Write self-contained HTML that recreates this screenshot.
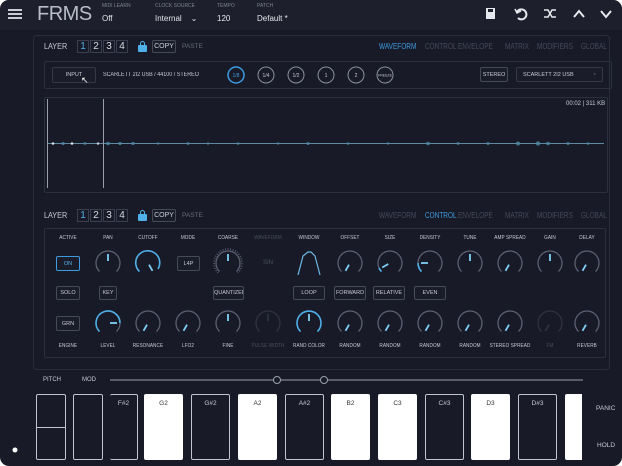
<!DOCTYPE html>
<html><head><meta charset="utf-8"><style>
*{margin:0;padding:0;box-sizing:border-box}
body{width:622px;height:466px;background:#fff;overflow:hidden;font-family:"Liberation Sans",sans-serif}
#app{position:absolute;left:0;top:0;width:622px;height:466px;background:#191a27;border-radius:9px;overflow:hidden}
.a{position:absolute;white-space:nowrap}
.t{position:absolute;white-space:nowrap;font-size:5.5px;color:#c7cbd6;transform:translateX(-50%) scaleX(.85);letter-spacing:.1px}
.d{color:#4a4f60}
.box{position:absolute;border:1px solid #3a3e4e;border-radius:2px}
.btn{position:absolute;border:1px solid #454a5a;border-radius:2px;font-size:5.5px;color:#c7cbd6;text-align:center;background:#1b1c29;white-space:nowrap;overflow:hidden}
.lab{font-size:5px;color:#7d8293}
.val{font-size:8px;color:#e4e6ec}
.tab{position:absolute;font-size:8.5px;color:#454a5c;transform:scaleX(.76);transform-origin:left;white-space:nowrap}
.num{position:absolute;width:12px;height:13px;border:1px solid #3a3e4e;font-size:10px;color:#d7dae2;text-align:center;line-height:12px}
.key{position:absolute;top:394px;height:66px;width:39px;border:1px solid #bfc3cc;border-radius:2px;font-size:6.5px;text-align:center;padding-top:5px;color:#c7cbd6}
.w{background:#fff;color:#333;border-color:#fff}
</style></head><body><div id="app">
<div class="a" style="left:0;top:0;width:622px;height:30px;background:#1e1f2c"></div>
<div class="a" style="left:8px;top:9px;width:14px;height:1.5px;background:#c9ccd5;box-shadow:0 4px 0 #c9ccd5,0 8px 0 #c9ccd5"></div>
<div class="a" style="left:37px;top:3px;font-size:20px;color:#b9bdc8;font-weight:300;letter-spacing:-.5px">FRMS</div>
<div class="a lab" style="left:102px;top:3px">MIDI LEARN</div>
<div class="a val" style="left:102px;top:14px">Off</div>
<div class="a lab" style="left:155px;top:3px">CLOCK SOURCE</div>
<div class="a val" style="left:155px;top:14px">Internal &nbsp;&nbsp;&nbsp;⌄</div>
<div class="a lab" style="left:217px;top:3px">TEMPO</div>
<div class="a val" style="left:217px;top:14px">120</div>
<div class="a lab" style="left:257px;top:3px">PATCH</div>
<div class="a val" style="left:257px;top:14px">Default *</div>
<svg class="a" style="left:480px;top:4px" width="140" height="20" viewBox="0 0 140 20" fill="none" stroke="#e6e8ee" stroke-width="2">
<rect x="6" y="4" width="9" height="11" fill="#e6e8ee" stroke="none"/><rect x="8" y="5" width="5" height="3" fill="#1e1f2c" stroke="none"/>
<path d="M37 8 A5 5 0 1 1 38 14" /><path d="M35 5 L37 9 L41 7" stroke-width="1.5"/>
<path d="M64 6 L68 6 L72 13 L76 13 M64 13 L68 13 L72 6 L76 6" stroke-width="1.5"/>
<path d="M94 13 L99 7 L104 13"/><path d="M121 7 L126 13 L131 7"/>
</svg>
<div class="box" style="left:33px;top:35px;width:577px;height:335px;border-radius:4px;border-color:#2a2d3c"></div>
<div class="a" style="left:44px;top:41px;font-size:8.5px;color:#c7cbd6;transform:scaleX(.85);transform-origin:left">LAYER</div>
<div class="num" style="left:77px;top:40px;color:#4fb0e8">1</div><div class="num" style="left:90px;top:40px">2</div><div class="num" style="left:103px;top:40px">3</div><div class="num" style="left:116px;top:40px">4</div>
<div class="a" style="left:138px;top:41px;width:9px;height:11px"><div style="position:absolute;left:2px;top:0;width:5px;height:6px;border:1.5px solid #4fb0e8;border-radius:3px 3px 0 0"></div><div style="position:absolute;left:0;top:4px;width:9px;height:7px;background:#4fb0e8;border-radius:1px"></div></div>
<div class="btn" style="left:152px;top:40px;width:24px;height:13px;font-size:7px;line-height:12px">COPY</div>
<div class="a" style="left:182px;top:43px;font-size:6.5px;color:#666b7c">PASTE</div>
<div class="tab" style="left:379px;top:41px;color:#3d9be0">WAVEFORM</div>
<div class="tab" style="left:425px;top:41px">CONTROL</div>
<div class="tab" style="left:458px;top:41px">ENVELOPE</div>
<div class="tab" style="left:505px;top:41px">MATRIX</div>
<div class="tab" style="left:537px;top:41px">MODIFIERS</div>
<div class="tab" style="left:581px;top:41px">GLOBAL</div>
<div class="box" style="left:44px;top:61px;width:568px;height:28px;border-color:#2c2f3e"></div>
<div class="btn" style="left:52px;top:67px;width:44px;height:16px;line-height:15px;border-color:#353848">INPUT</div>
<div class="a" style="left:81px;top:75px;color:#fff;font-size:9px">↖</div>
<div class="a" style="left:103px;top:72px;font-size:6px;color:#c7cbd6;transform:scaleX(.9);transform-origin:left">SCARLETT 2I2 USB / 44100 / STEREO</div>
<svg class="a" style="left:220px;top:64px" width="180" height="22"><g fill="none" stroke="#8a8f9e" stroke-width="1">
<circle cx="16" cy="11" r="8" stroke="#3d9be0" stroke-width="1.5"/><circle cx="46" cy="11" r="8"/><circle cx="76" cy="11" r="8"/><circle cx="106" cy="11" r="8"/><circle cx="136" cy="11" r="8"/><circle cx="165" cy="11" r="8"/></g>
<g font-size="5" fill="#c7cbd6" text-anchor="middle" font-family="Liberation Sans"><text x="16" y="13" fill="#3d9be0">1/8</text><text x="46" y="13">1/4</text><text x="76" y="13">1/2</text><text x="106" y="13">1</text><text x="136" y="13">2</text><text x="165" y="12.5" font-size="3.5">FREEZE</text></g></svg>
<div class="btn" style="left:480px;top:67px;width:28px;height:15px;line-height:14px">STEREO</div>
<div class="btn" style="left:516px;top:67px;width:87px;height:15px;line-height:14px;text-align:left;padding-left:6px;border-color:#353848">SCARLETT 2I2 USB<span style="position:absolute;right:6px;color:#444">▾</span></div>
<div class="box" style="left:44px;top:97px;width:564px;height:96px;border-color:#2c2f3e"></div>
<div class="a" style="left:566px;top:101px;font-size:6px;color:#c7cbd6">00:02 | 311 KB</div>
<div class="a" style="left:48px;top:143px;width:556px;height:1px;background:#5e8aa0"></div>
<svg class="a" style="left:48px;top:139px" width="560" height="9"><g fill="#4f8aa8" opacity=".8">
<circle cx="5" cy="4.5" r="1.3" fill="#fff"/><circle cx="15" cy="4.5" r="1.6"/><circle cx="24" cy="4.5" r="1.3" fill="#fff"/><circle cx="37" cy="4.5" r="1.4"/><circle cx="50" cy="4.5" r="1.3" fill="#ddd"/><circle cx="60" cy="4.5" r="1.8"/><circle cx="72" cy="4.5" r="1.6"/><circle cx="85" cy="4.5" r="1.6"/><circle cx="110" cy="4.5" r="1.2"/><circle cx="140" cy="4.5" r="1.4"/><circle cx="160" cy="4.5" r="1.2"/><circle cx="190" cy="4.5" r="1.3"/><circle cx="230" cy="4.5" r="1.2"/><circle cx="260" cy="4.5" r="1.5"/><circle cx="300" cy="4.5" r="1.3"/><circle cx="340" cy="4.5" r="1.2"/><circle cx="380" cy="4.5" r="1.8"/><circle cx="410" cy="4.5" r="1.4"/><circle cx="440" cy="4.5" r="1.5"/><circle cx="470" cy="4.5" r="2"/><circle cx="490" cy="4.5" r="2.2"/><circle cx="500" cy="4.5" r="1.8"/><circle cx="520" cy="4.5" r="1.5"/><circle cx="540" cy="4.5" r="1.3"/></g></svg>
<div class="a" style="left:47px;top:99px;width:1px;height:89px;background:#9a9eab"></div>
<div class="a" style="left:103px;top:99px;width:1px;height:89px;background:#9a9eab"></div>
<div class="a" style="left:44px;top:210px;font-size:8.5px;color:#c7cbd6;transform:scaleX(.85);transform-origin:left">LAYER</div>
<div class="num" style="left:77px;top:209px;color:#4fb0e8">1</div><div class="num" style="left:90px;top:209px">2</div><div class="num" style="left:103px;top:209px">3</div><div class="num" style="left:116px;top:209px">4</div>
<div class="a" style="left:138px;top:210px;width:9px;height:11px"><div style="position:absolute;left:2px;top:0;width:5px;height:6px;border:1.5px solid #4fb0e8;border-radius:3px 3px 0 0"></div><div style="position:absolute;left:0;top:4px;width:9px;height:7px;background:#4fb0e8;border-radius:1px"></div></div>
<div class="btn" style="left:152px;top:209px;width:24px;height:13px;font-size:7px;line-height:12px">COPY</div>
<div class="a" style="left:182px;top:212px;font-size:6.5px;color:#666b7c">PASTE</div>
<div class="tab" style="left:379px;top:210px">WAVEFORM</div>
<div class="tab" style="left:425px;top:210px;color:#3d9be0">CONTROL</div>
<div class="tab" style="left:458px;top:210px">ENVELOPE</div>
<div class="tab" style="left:505px;top:210px">MATRIX</div>
<div class="tab" style="left:537px;top:210px">MODIFIERS</div>
<div class="tab" style="left:581px;top:210px">GLOBAL</div>
<div class="box" style="left:44px;top:228px;width:562px;height:130px;border-color:#2c2f3e"></div>
<div class="t" style="left:68px;top:235px">ACTIVE</div><div class="t" style="left:108px;top:235px">PAN</div><div class="t" style="left:148px;top:235px">CUTOFF</div><div class="t" style="left:188px;top:235px">MODE</div><div class="t" style="left:228px;top:235px">COARSE</div><div class="t d" style="left:268px;top:235px">WAVEFORM</div><div class="t" style="left:309px;top:235px">WINDOW</div><div class="t" style="left:350px;top:235px">OFFSET</div><div class="t" style="left:390px;top:235px">SIZE</div><div class="t" style="left:430px;top:235px">DENSITY</div><div class="t" style="left:470px;top:235px">TUNE</div><div class="t" style="left:510px;top:235px">AMP SPREAD</div><div class="t" style="left:550px;top:235px">GAIN</div><div class="t" style="left:587px;top:235px">DELAY</div>
<div class="t" style="left:68px;top:343px">ENGINE</div><div class="t" style="left:108px;top:343px">LEVEL</div><div class="t" style="left:148px;top:343px">RESONANCE</div><div class="t" style="left:188px;top:343px">LFO2</div><div class="t" style="left:228px;top:343px">FINE</div><div class="t d" style="left:268px;top:343px">PULSE WIDTH</div><div class="t" style="left:309px;top:343px">RAND COLOR</div><div class="t" style="left:350px;top:343px">RANDOM</div><div class="t" style="left:390px;top:343px">RANDOM</div><div class="t" style="left:430px;top:343px">RANDOM</div><div class="t" style="left:470px;top:343px">RANDOM</div><div class="t" style="left:510px;top:343px">STEREO SPREAD</div><div class="t d" style="left:550px;top:343px">FM</div><div class="t" style="left:587px;top:343px">REVERB</div>
<div class="btn" style="left:56px;top:256px;width:24px;height:15px;line-height:14px;border-color:#3d9be0;color:#5ab4ee">ON</div>
<div class="btn" style="left:177px;top:256px;width:23px;height:15px;line-height:14px">L4P</div>
<div class="a" style="left:263px;top:260px;font-size:6px;color:#4a4f60">SIN</div>
<div class="btn" style="left:56px;top:316px;width:24px;height:15px;line-height:14px">GRN</div>
<div class="btn" style="left:56px;top:286px;width:24px;height:14px;line-height:13px">SOLO</div>
<div class="btn" style="left:99px;top:286px;width:18px;height:14px;line-height:13px">KEY</div>
<div class="btn" style="left:213px;top:286px;width:31px;height:14px;line-height:13px">QUANTIZED</div>
<div class="btn" style="left:293px;top:286px;width:32px;height:14px;line-height:13px">LOOP</div>
<div class="btn" style="left:334px;top:286px;width:32px;height:14px;line-height:13px">FORWARD</div>
<div class="btn" style="left:373px;top:286px;width:32px;height:14px;line-height:13px">RELATIVE</div>
<div class="btn" style="left:414px;top:286px;width:32px;height:14px;line-height:13px">EVEN</div>
<svg class="a" style="left:0;top:0" width="622" height="466">
<defs><path id="k" d="M-8.5 8.5 A12 12 0 1 1 8.5 8.5" fill="none" stroke="#5b6072" stroke-width="1.3"/>
<path id="kd" d="M-8.5 8.5 A12 12 0 1 1 8.5 8.5" fill="none" stroke="#2f3242" stroke-width="1.3"/>
<line id="i" x1="0" y1="-2" x2="0" y2="-9" stroke="#7fd0f6" stroke-width="1.8"/>
<line id="id" x1="0" y1="-2" x2="0" y2="-9" stroke="#2f3242" stroke-width="1.8"/></defs>
<g transform="translate(108 263)"><use href="#k"/><use href="#i"/></g>
<g transform="translate(148 263)"><path d="M-8.5 8.5 A12 12 0 1 1 10 6" fill="none" stroke="#4fb0e8" stroke-width="1.6"/><use href="#i" transform="rotate(150)"/></g>
<g transform="translate(228 263)"><use href="#k"/><path d="M-9.9 9.9 A14 14 0 1 1 9.9 9.9" fill="none" stroke="#5b6072" stroke-width="1.5" stroke-dasharray="1 1.5"/><use href="#i"/></g>
<path d="M298 275 L303 256 L308 252 L311 252 L315 256 L320 275" fill="none" stroke="#6bb8e6" stroke-width="1.2"/>
<g transform="translate(350 263)"><use href="#k"/><use href="#i" transform="rotate(-150)"/></g>
<g transform="translate(390 263)"><use href="#k"/><path d="M-8.5 8.5 A12 12 0 0 1 -11 5" fill="none" stroke="#4fb0e8" stroke-width="1.6"/><use href="#i" transform="rotate(-120)"/></g>
<g transform="translate(430 263)"><use href="#k"/><path d="M-8.5 8.5 A12 12 0 0 1 -12 0" fill="none" stroke="#4fb0e8" stroke-width="1.6"/><use href="#i" transform="rotate(-90)"/></g>
<g transform="translate(470 263)"><use href="#k"/><use href="#i"/></g>
<g transform="translate(510 263)"><use href="#k"/><use href="#i" transform="rotate(-150)"/></g>
<g transform="translate(550 263)"><use href="#k"/><use href="#i"/></g>
<g transform="translate(587 263)"><use href="#k"/><use href="#i" transform="rotate(-150)"/></g>
<g transform="translate(108 323)"><path d="M-8.5 8.5 A12 12 0 1 1 12 0" fill="none" stroke="#4fb0e8" stroke-width="1.6"/><path d="M12 0 A12 12 0 0 1 8.5 8.5" fill="none" stroke="#5b6072" stroke-width="1.3"/><use href="#i" transform="rotate(90)"/></g>
<g transform="translate(148 323)"><use href="#k"/><use href="#i" transform="rotate(-150)"/></g>
<g transform="translate(188 323)"><use href="#k"/><use href="#i" transform="rotate(-150)"/></g>
<g transform="translate(228 323)"><use href="#k"/><use href="#i"/></g>
<g transform="translate(268 323)"><use href="#kd"/><use href="#id"/></g>
<g transform="translate(309 323)"><path d="M-8.5 8.5 A12 12 0 1 1 8.5 8.5" fill="none" stroke="#4fb0e8" stroke-width="1.6"/><use href="#i"/></g>
<g transform="translate(350 323)"><use href="#k"/><use href="#i" transform="rotate(-150)"/></g>
<g transform="translate(390 323)"><use href="#k"/><use href="#i" transform="rotate(-150)"/></g>
<g transform="translate(430 323)"><use href="#k"/><use href="#i" transform="rotate(-150)"/></g>
<g transform="translate(470 323)"><use href="#k"/><use href="#i" transform="rotate(-150)"/></g>
<g transform="translate(510 323)"><use href="#k"/><use href="#i" transform="rotate(-150)"/></g>
<g transform="translate(550 323)"><use href="#kd"/><use href="#id" transform="rotate(-150)"/></g>
<g transform="translate(587 323)"><use href="#k"/><use href="#i" transform="rotate(-150)"/></g>
<line x1="110" y1="380" x2="583" y2="380" stroke="#9a9eab" stroke-width="1"/>
<circle cx="277" cy="380" r="3.5" fill="#191a27" stroke="#9a9eab"/><circle cx="324" cy="380" r="3.5" fill="#191a27" stroke="#9a9eab"/>
<circle cx="15" cy="450" r="2.5" fill="#fff"/>
</svg>
<div class="a" style="left:43px;top:377px;font-size:6px;color:#c7cbd6">PITCH</div>
<div class="a" style="left:82px;top:377px;font-size:6px;color:#c7cbd6">MOD</div>
<div class="key" style="left:36px;width:30px;padding:0"><div style="position:absolute;left:0;right:0;top:32px;height:1px;background:#bfc3cc"></div></div>
<div class="key" style="left:73px;width:30px;padding:0"></div>
<div class="key" style="left:110px;width:28px;border-left:none">F#2</div>
<div class="key w" style="left:144px">G2</div>
<div class="key" style="left:191px">G#2</div>
<div class="key w" style="left:238px">A2</div>
<div class="key" style="left:285px">A#2</div>
<div class="key w" style="left:331px">B2</div>
<div class="key w" style="left:378px">C3</div>
<div class="key" style="left:425px">C#3</div>
<div class="key w" style="left:471px">D3</div>
<div class="key" style="left:518px">D#3</div>
<div class="key w" style="left:565px;width:17px;border-radius:2px 0 0 2px"></div>
<div class="a" style="left:596px;top:405px;font-size:6.5px;color:#c7cbd6">PANIC</div>
<div class="a" style="left:597px;top:442px;font-size:6.5px;color:#c7cbd6">HOLD</div>
</div></body></html>
